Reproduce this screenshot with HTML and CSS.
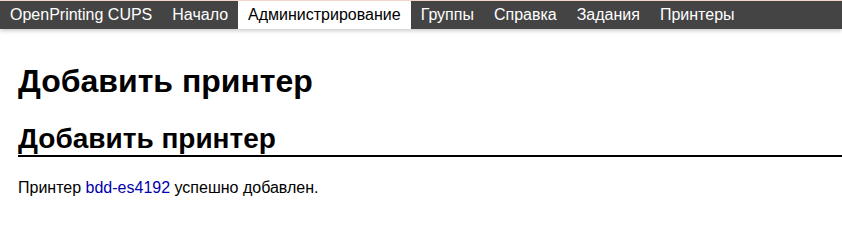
FILE: index.html
```html
<!DOCTYPE html>
<html lang="ru">
  <head>
    <meta charset="UTF-8" />
    <title>Добавить принтер - CUPS</title>
    <link rel="stylesheet" href="styles.css">
  </head>
  <body>
    <div class="header">
      <ul>
        <li><a href="#">OpenPrinting CUPS</a></li>
        <li><a href="#">Начало</a></li>
        <li><a class="active" href="#">Администрирование</a></li>
        <li><a href="#">Группы</a></li>
        <li><a href="#">Справка</a></li>
        <li><a href="#">Задания</a></li>
        <li><a href="#">Принтеры</a></li>
      </ul>
    </div>
    <div class="body">
      <h1 class="title">Добавить принтер</h1>
      <h2 class="title">Добавить принтер</h2>
      <p>Принтер <a href="#">bdd-es4192</a> успешно добавлен.</p>
    </div>
  </body>
</html>
```

FILE: styles.css
```css
body {
  margin: 0;
  font-family: "Liberation Sans", Arial, sans-serif;
  font-size: 16px;
  color: #000;
  background: #fff;
}
.header {
  border-top: 1px solid #f2d6cc;
  background: #444;
  box-shadow: 0 2px 4px rgba(0, 0, 0, 0.2);
}
.header ul {
  list-style: none;
  margin: 0;
  padding: 0;
  display: flex;
}
.header a {
  display: block;
  padding: 5px 10px;
  font-size: 16px;
  line-height: 18px;
  color: #fff;
  text-decoration: none;
}
.header a.active {
  background: #fff;
  color: #000;
}
.body {
  padding: 0 0 0 18px;
}
h1.title {
  font-size: 32px;
  margin: 34px 0 0;
}
h2.title {
  font-size: 28px;
  margin: 23px 0 0;
  border-bottom: 2px solid #000;
}
p {
  margin: 22px 0;
  line-height: 18px;
}
a {
  color: #00a;
  text-decoration: none;
}
```
